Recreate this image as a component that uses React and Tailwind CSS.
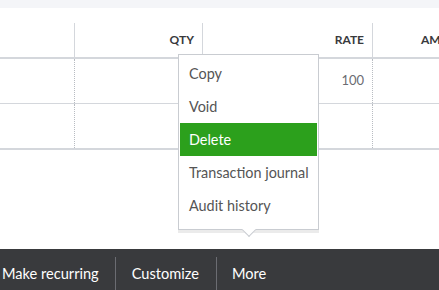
export default function App() {
  const font = { fontFamily: "Lato, 'Open Sans', sans-serif" };
  return (
    <div className="relative w-[439px] h-[290px] overflow-hidden bg-white flex flex-col" style={font}>
      <div className="h-[8px] bg-[#f4f5f8] shrink-0" />
      <div className="h-[15px] shrink-0" />
      {/* header */}
      <div className="flex h-[34px] shrink-0 border-b-2 border-[#d4d7dc] box-content">
        <div className="w-[75px] shrink-0 border-r border-[#d4d7dc]" />
        <div className="w-[128px] shrink-0 border-r border-[#d4d7dc] flex items-center justify-end pr-[8px] text-[12px] font-bold text-[#393a3d]">QTY</div>
        <div className="w-[170px] shrink-0 border-r border-[#d4d7dc] flex items-center justify-end pr-[8px] text-[12px] font-bold text-[#393a3d]">RATE</div>
        <div className="w-[120px] shrink-0 flex items-center justify-start pl-[48px] text-[12px] font-bold text-[#393a3d]">AMOUNT</div>
      </div>
      {/* rows */}
      <div className="flex h-[44px] shrink-0 border-b border-[#d4d7dc] box-content">
        <div className="w-[75px] shrink-0 border-r border-dotted border-[#b8bcc2]" />
        <div className="w-[128px] shrink-0 border-r border-dotted border-[#b8bcc2]" />
        <div className="w-[170px] shrink-0 border-r border-dotted border-[#b8bcc2] flex items-center justify-end pr-[8px] text-[13px] text-[#6b6c72]">100</div>
        <div className="flex-1" />
      </div>
      <div className="flex h-[44px] shrink-0 border-b-2 border-[#d4d7dc] box-content">
        <div className="w-[75px] shrink-0 border-r border-dotted border-[#b8bcc2]" />
        <div className="w-[128px] shrink-0 border-r border-dotted border-[#b8bcc2]" />
        <div className="w-[170px] shrink-0 border-r border-dotted border-[#b8bcc2]" />
        <div className="flex-1" />
      </div>
      <div className="flex-1" />
      {/* bottom bar */}
      <div className="h-[41px] shrink-0 bg-[#393a3d] flex items-stretch text-[14.6px] text-white">
        <div className="flex items-center pl-[2px] pr-[16px] mt-[8px] border-r border-[#6b6c72]">Make recurring</div>
        <div className="flex items-center pl-[16px] pr-[17px] mt-[8px] border-r border-[#6b6c72]">Customize</div>
        <div className="flex items-center px-[15px] mt-[8px]">More</div>
      </div>

      {/* menu */}
      <div className="absolute left-[178px] top-[54px] w-[141px] bg-white border border-[#c9ccd1] shadow-[0_3px_0_0_rgba(0,0,0,0.08)] pt-[2px] pb-[7px] px-[1px] text-[14.4px] text-[#555]">
        <div className="h-[33px] flex items-center pl-[9px]">Copy</div>
        <div className="h-[33px] flex items-center pl-[9px]">Void</div>
        <div className="h-[33px] flex items-center pl-[9px] bg-[#2ca01c] text-white">Delete</div>
        <div className="h-[33px] flex items-center pl-[9px]">Transaction journal</div>
        <div className="h-[33px] flex items-center pl-[9px]">Audit history</div>
        <div className="absolute left-[65px] -bottom-[6px] w-[10px] h-[10px] bg-white rotate-45 border-r border-b border-[#c9ccd1]" />
      </div>
    </div>
  );
}
